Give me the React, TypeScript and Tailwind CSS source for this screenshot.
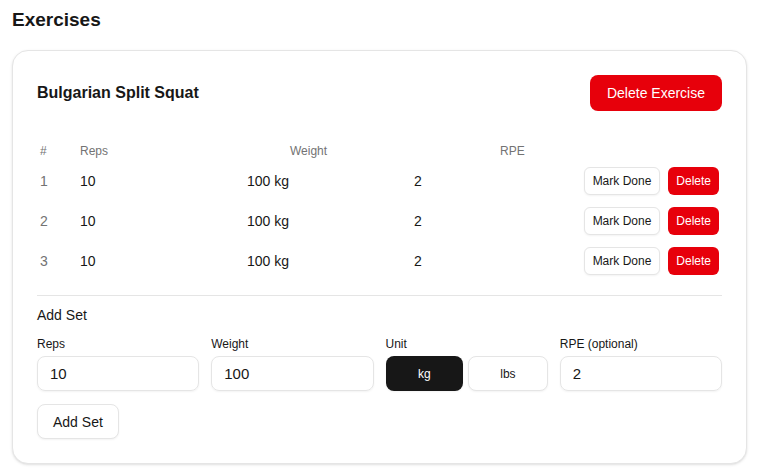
import React, { useState } from 'react';

interface SetRow {
  id: number;
  reps: number;
  weight: number;
  unit: 'kg' | 'lbs';
  rpe: number;
}

const initialSets: SetRow[] = [
  { id: 1, reps: 10, weight: 100, unit: 'kg', rpe: 2 },
  { id: 2, reps: 10, weight: 100, unit: 'kg', rpe: 2 },
  { id: 3, reps: 10, weight: 100, unit: 'kg', rpe: 2 },
];

export default function App() {
  const [sets, setSets] = useState<SetRow[]>(initialSets);
  const [reps, setReps] = useState('10');
  const [weight, setWeight] = useState('100');
  const [unit, setUnit] = useState<'kg' | 'lbs'>('kg');
  const [rpe, setRpe] = useState('2');

  const addSet = () => {
    setSets([
      ...sets,
      { id: sets.length + 1, reps: Number(reps), weight: Number(weight), unit, rpe: Number(rpe) },
    ]);
  };

  return (
    <div className="min-h-screen bg-white pl-3 pr-[10px] pt-[6px] text-neutral-900 font-['Liberation_Sans',Arial,sans-serif]">
      <h2 className="mb-4 text-[19px] font-bold leading-7">Exercises</h2>

      {/* Exercise card */}
      <div className="rounded-2xl border border-neutral-200 bg-white p-6 shadow-sm">
        <div className="flex h-9 items-center justify-between">
          <h3 className="text-base font-bold">Bulgarian Split Squat</h3>
          <button className="h-9 rounded-lg bg-red-600 px-[17px] text-sm text-white">Delete Exercise</button>
        </div>

        {/* Sets table */}
        <div className="mt-[30px]">
          <div className="grid h-5 grid-cols-[40px_210px_210px_1fr] items-center px-[3px] text-xs text-neutral-500">
            <span>#</span>
            <span>Reps</span>
            <span>Weight</span>
            <span>RPE</span>
          </div>
          {sets.map((s, i) => (
            <div
              key={s.id}
              className="grid h-10 grid-cols-[40px_167px_167px_1fr] items-center px-[3px] text-sm"
            >
              <span className="text-neutral-500">{i + 1}</span>
              <span>{s.reps}</span>
              <span>
                {s.weight} {s.unit}
              </span>
              <div className="flex items-center justify-between">
                <span>{s.rpe}</span>
                <div className="flex gap-2">
                  <button className="h-7 rounded-md border border-neutral-200 bg-white px-2 text-xs shadow-xs">
                    Mark Done
                  </button>
                  <button
                    className="h-7 rounded-md bg-red-600 px-2 text-xs text-white"
                    onClick={() => setSets(sets.filter((x) => x.id !== s.id))}
                  >
                    Delete
                  </button>
                </div>
              </div>
            </div>
          ))}
        </div>

        {/* Add set form */}
        <div className="mt-[14px] border-t border-neutral-200 pt-[9px]">
          <div className="text-sm leading-5">Add Set</div>
          <div className="mt-[11px] grid grid-cols-4 gap-3">
            <label className="flex flex-col gap-1 text-xs">
              Reps
              <input
                value={reps}
                onChange={(e) => setReps(e.target.value)}
                className="h-[35px] rounded-lg border border-neutral-200 px-3 text-[15px] shadow-xs outline-none"
              />
            </label>
            <label className="flex flex-col gap-1 text-xs">
              Weight
              <input
                value={weight}
                onChange={(e) => setWeight(e.target.value)}
                className="h-[35px] rounded-lg border border-neutral-200 px-3 text-[15px] shadow-xs outline-none"
              />
            </label>
            <div className="flex flex-col gap-1 text-xs">
              Unit
              <div className="flex gap-[5px]">
                <button
                  onClick={() => setUnit('kg')}
                  className={
                    unit === 'kg'
                      ? 'h-[35px] flex-1 rounded-lg bg-neutral-900 text-xs text-white shadow-xs'
                      : 'h-[35px] flex-1 rounded-lg border border-neutral-200 bg-white text-xs shadow-xs'
                  }
                >
                  kg
                </button>
                <button
                  onClick={() => setUnit('lbs')}
                  className={
                    unit === 'lbs'
                      ? 'h-[35px] flex-1 rounded-lg bg-neutral-900 text-xs text-white shadow-xs'
                      : 'h-[35px] flex-1 rounded-lg border border-neutral-200 bg-white text-xs shadow-xs'
                  }
                >
                  lbs
                </button>
              </div>
            </div>
            <label className="flex flex-col gap-1 text-xs">
              RPE (optional)
              <input
                value={rpe}
                onChange={(e) => setRpe(e.target.value)}
                className="h-[35px] rounded-lg border border-neutral-200 px-3 text-[15px] shadow-xs outline-none"
              />
            </label>
          </div>
          <button
            onClick={addSet}
            className="mt-[13px] h-[35px] rounded-lg border border-neutral-200 bg-white px-[15px] text-sm shadow-xs"
          >
            Add Set
          </button>
        </div>
      </div>
    </div>
  );
}
